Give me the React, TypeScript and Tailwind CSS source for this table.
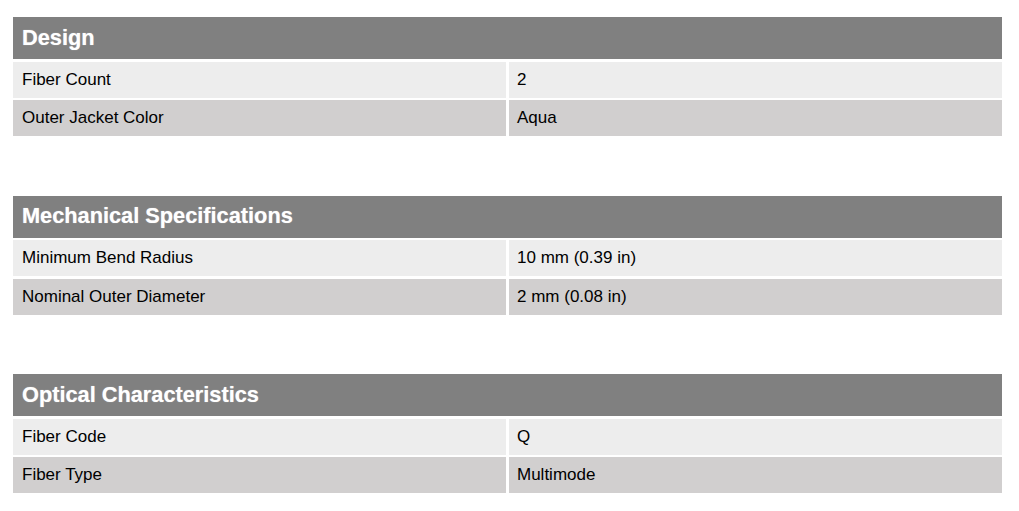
const sections = [
  {
    title: "Design",
    rows: [
      ["Fiber Count", "2"],
      ["Outer Jacket Color", "Aqua"],
    ],
  },
  {
    title: "Mechanical Specifications",
    rows: [
      ["Minimum Bend Radius", "10 mm (0.39 in)"],
      ["Nominal Outer Diameter", "2 mm (0.08 in)"],
    ],
  },
  {
    title: "Optical Characteristics",
    rows: [
      ["Fiber Code", "Q"],
      ["Fiber Type", "Multimode"],
    ],
  },
];

export default function App() {
  return (
    <div className="w-[1019px] h-[511px] bg-white pl-[13px] pt-[17px] font-['Liberation_Sans',Arial,sans-serif]">
      <div className="flex flex-col gap-[59.5px] w-[989px]">
        {sections.map((s) => (
          <div key={s.title} className="flex flex-col">
            <div className="h-[42px] bg-[#808080] flex items-center pl-[9px] text-[21.75px] font-bold text-white [text-shadow:0_0_1px_rgba(255,255,255,0.6)]">
              {s.title}
            </div>
            {s.rows.map(([label, value], i) => (
              <div key={label} className="flex gap-[3px] h-[36px] mt-[2.5px]">
                <div
                  className={`w-[493px] flex items-center pl-[9px] text-[17px] text-black ${
                    i === 0 ? "bg-[#ededed]" : "bg-[#d1cfcf]"
                  }`}
                >
                  {label}
                </div>
                <div
                  className={`flex-1 flex items-center pl-[8px] text-[17px] text-black ${
                    i === 0 ? "bg-[#ededed]" : "bg-[#d1cfcf]"
                  }`}
                >
                  {value}
                </div>
              </div>
            ))}
          </div>
        ))}
      </div>
    </div>
  );
}
